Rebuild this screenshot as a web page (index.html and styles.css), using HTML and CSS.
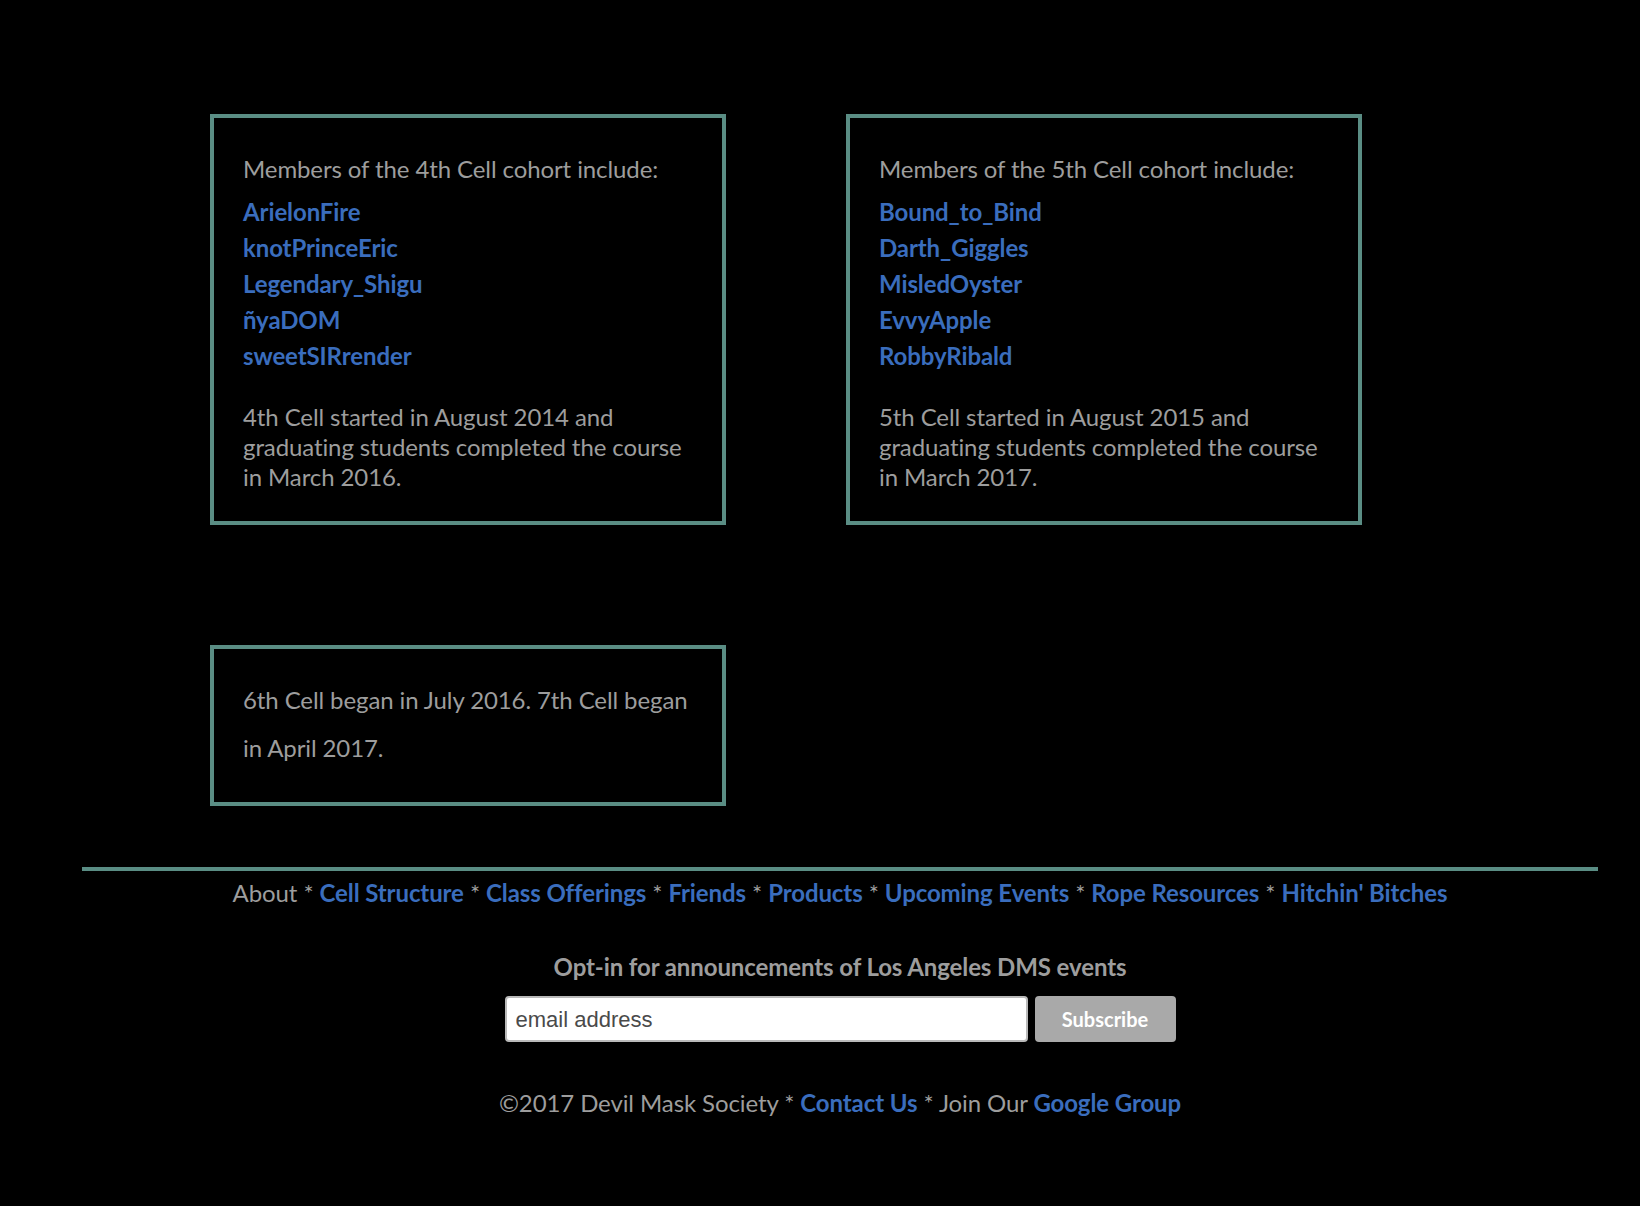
FILE: index.html
```html
<!DOCTYPE html>
<html>
<head>
<meta charset="utf-8">
<link rel="stylesheet" href="styles.css">
</head>
<body>
<main class="cells">
  <section class="cell">
    <p class="intro">Members of the 4th Cell cohort include:</p>
    <ul class="members">
      <li><a href="#">ArielonFire</a></li>
      <li><a href="#">knotPrinceEric</a></li>
      <li><a href="#">Legendary_Shigu</a></li>
      <li><a href="#">ñyaDOM</a></li>
      <li><a href="#">sweetSIRrender</a></li>
    </ul>
    <p class="note">4th Cell started in August 2014 and graduating students completed the course in March 2016.</p>
  </section>
  <section class="cell">
    <p class="intro">Members of the 5th Cell cohort include:</p>
    <ul class="members">
      <li><a href="#">Bound_to_Bind</a></li>
      <li><a href="#">Darth_Giggles</a></li>
      <li><a href="#">MisledOyster</a></li>
      <li><a href="#">EvvyApple</a></li>
      <li><a href="#">RobbyRibald</a></li>
    </ul>
    <p class="note">5th Cell started in August 2015 and graduating students completed the course in March 2017.</p>
  </section>
  <section class="cell cell-short">
    <p class="wide">6th Cell began in July 2016. 7th Cell began in April 2017.</p>
  </section>
</main>
<footer class="footer">
  <hr class="rule">
  <nav class="nav">About * <a href="#">Cell Structure</a> * <a href="#">Class Offerings</a> * <a href="#">Friends</a> * <a href="#">Products</a> * <a href="#">Upcoming Events</a> * <a href="#">Rope Resources</a> * <a href="#">Hitchin' Bitches</a></nav>
  <p class="optin">Opt-in for announcements of Los Angeles DMS events</p>
  <form class="signup">
    <input class="email" type="text" placeholder="email address">
    <button class="subscribe" type="button">Subscribe</button>
  </form>
  <p class="copy">©2017 Devil Mask Society * <a href="#">Contact Us</a> * Join Our <a href="#">Google Group</a></p>
</footer>
</body>
</html>
```
FILE: styles.css
```css
html, body {
  margin: 0;
  padding: 0;
  background: #000;
}
body {
  font-family: Lato, "Open Sans", sans-serif;
  color: #9d9d9d;
  font-size: 24px;
  letter-spacing: -0.1px;
}
a {
  color: #3a6dbd;
  font-weight: 700;
  text-decoration: none;
}
.cells {
  display: grid;
  grid-template-columns: 516px 516px;
  column-gap: 120px;
  row-gap: 120px;
  padding: 114px 0 0 210px;
}
.cell {
  border: 4px solid #5a8d84;
  padding: 36px 29px 29px;
}
.intro {
  margin: 0 0 10px;
  line-height: 30px;
}
.members {
  list-style: none;
  margin: 0;
  padding: 0;
  line-height: 36px;
}
.note {
  margin: 28px 0 0;
  line-height: 30px;
}
.cell-short {
  padding: 27px 29px 30px;
}
.wide {
  margin: 0;
  line-height: 48px;
}
.footer {
  margin: 61px 42px 0 82px;
  text-align: center;
  padding-bottom: 60px;
}
.rule {
  border: 0;
  height: 4px;
  background: #5a8d84;
  margin: 0;
}
.nav {
  margin-top: 7px;
  line-height: 30px;
}
.optin {
  margin: 44px 0 0;
  line-height: 30px;
  font-weight: 700;
}
.signup {
  display: flex;
  justify-content: center;
  gap: 7px;
  margin-top: 14px;
}
.email {
  box-sizing: border-box;
  width: 523px;
  height: 46px;
  border: 2px solid #b9b9b9;
  border-radius: 4px;
  background: #fff;
  padding: 2px 9px 0;
  font-family: "Liberation Sans", Arial, sans-serif;
  font-size: 22px;
  letter-spacing: 0;
  color: #4a4a4a;
}
.email::placeholder {
  color: #4a4a4a;
}
.subscribe {
  width: 141px;
  height: 46px;
  border: 0;
  border-radius: 4px;
  background: #a9a9a9;
  color: #fff;
  font-family: Lato, sans-serif;
  font-weight: 700;
  font-size: 20px;
  letter-spacing: 0;
}
.copy {
  margin: 46px 0 0;
  line-height: 30px;
}
```
